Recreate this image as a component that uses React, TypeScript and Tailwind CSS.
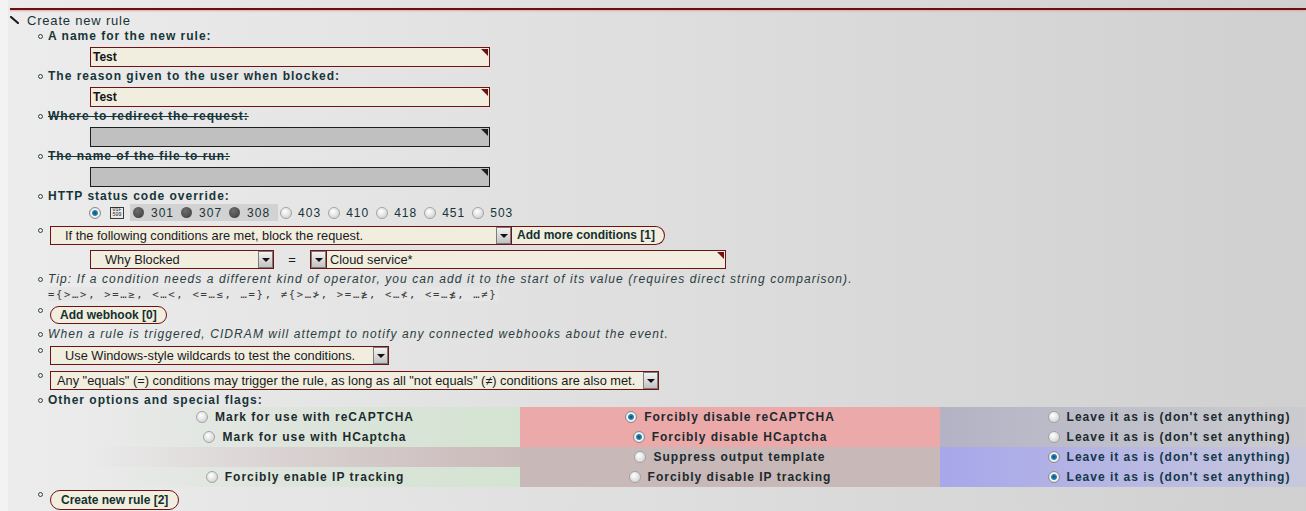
import React from "react";

type FlagRow = {
  left?: string;
  middle: string;
  middleOn: boolean;
  rightOn: boolean;
};

const flagRows: FlagRow[] = [
  { left: "Mark for use with reCAPTCHA", middle: "Forcibly disable reCAPTCHA", middleOn: true, rightOn: false },
  { left: "Mark for use with HCaptcha", middle: "Forcibly disable HCaptcha", middleOn: true, rightOn: false },
  { middle: "Suppress output template", middleOn: false, rightOn: true },
  { left: "Forcibly enable IP tracking", middle: "Forcibly disable IP tracking", middleOn: false, rightOn: true },
];

const statusCodes = ["403", "410", "418", "451", "503"];

function Radio({ checked }: { checked?: boolean }) {
  return checked ? (
    <span className="inline-block w-[12px] h-[12px] shrink-0 rounded-full border border-[#8c8c8c] bg-[radial-gradient(circle,#0b4c73_0px,#2c86b8_2.5px,#f6f6f6_3.5px,#d2d2d2_6px)]" />
  ) : (
    <span className="inline-block w-[12px] h-[12px] shrink-0 rounded-full border border-[#a3a3a3] bg-[radial-gradient(circle_at_40%_35%,#ffffff,#c9c9c9)]" />
  );
}

function DisabledRadio() {
  return <span className="inline-block w-[11px] h-[11px] shrink-0 rounded-full bg-[radial-gradient(circle_at_40%_35%,#6e6e6e,#3a3a3a)]" />;
}

// one list row: small hollow bullet, then the content
function Item({ raised, className = "", children }: { raised?: boolean; className?: string; children: React.ReactNode }) {
  return (
    <li className={`flex ${className}`}>
      <span className="w-[11px] shrink-0 flex">
        <span
          className={
            raised
              ? "mt-[2px] ml-[1px] w-[5px] h-[5px] rounded-full border border-[#2c4448]"
              : "mt-[6px] ml-[1px] w-[5px] h-[5px] rounded-full border border-[#2c4448]"
          }
        />
      </span>
      <div className="flex-1 min-w-0">{children}</div>
    </li>
  );
}

function Corner({ dark }: { dark?: boolean }) {
  return (
    <span
      className={
        dark
          ? "absolute top-[1px] right-[1px] w-0 h-0 border-l-[7px] border-l-transparent border-t-[7px] border-t-[#1e1e1e]"
          : "absolute top-[1px] right-[1px] w-0 h-0 border-l-[7px] border-l-transparent border-t-[7px] border-t-[#6e1212]"
      }
    />
  );
}

function Field({ value, disabled }: { value?: string; disabled?: boolean }) {
  return disabled ? (
    <div className="relative ml-[42px] mt-[3px] mb-[1px] w-[400px] h-[20px] border border-[#1e1e1e] bg-[#c0c0c0]">
      <Corner dark />
    </div>
  ) : (
    <div className="relative ml-[42px] mt-[3px] mb-[1px] w-[400px] h-[20px] border border-[#6e1212] bg-[#f1eee0] pl-[2px] text-[12px] font-bold leading-[18px] text-[#161616]">
      {value}
      <Corner />
    </div>
  );
}

function Arrow() {
  return (
    <span className="w-[15px] h-full shrink-0 border border-[#7c7c7c] bg-[linear-gradient(#f2f2f2,#c2c2c2)] flex items-center justify-center">
      <span className="w-0 h-0 border-x-[4px] border-x-transparent border-t-[4px] border-t-[#111]" />
    </span>
  );
}

function Dropdown({ text, className }: { text?: string; className: string }) {
  return (
    <div className={`flex h-[19px] border border-[#6e1212] bg-[#f1eee0] text-[12.8px] leading-[17px] text-[#1a1a1a] ${className}`}>
      <span className="flex-1 whitespace-nowrap overflow-hidden">{text}</span>
      <Arrow />
    </div>
  );
}

export default function App() {
  const label = "text-[12px] font-bold tracking-[1px] leading-[16px] text-[#173438]";
  const note = "text-[12px] italic tracking-[1.08px] leading-[16px] text-[#2b3d40]";

  return (
    <div className="w-[1306px] h-[511px] overflow-hidden bg-[#f3f3f3] font-['Liberation_Sans',Arial,sans-serif]">
      <div className="ml-[8px] h-full pt-[8px] bg-[linear-gradient(to_right,#ececec,#d0d0d0)]">
        <div className="ml-[2px] h-[2px] bg-[#6a1010] shadow-[0_1px_2px_#e9a3a3]" />

        <div className="mt-[2px] h-[16px] flex items-center">
          <svg width="9" height="8" viewBox="0 0 9 8" className="ml-[2px]">
            <path d="M1 1 L8 7" stroke="#1d1d1d" strokeWidth="2.2" strokeLinecap="round" />
          </svg>
          <span className="ml-[8px] pt-[1px] text-[13px] tracking-[0.8px] leading-[16px] text-[#173438]">Create new rule</span>
        </div>

        <ul className="pl-[29px]">
          <Item>
            <div className={label}>A name for the new rule:</div>
            <Field value="Test" />
          </Item>
          <Item>
            <div className={label}>The reason given to the user when blocked:</div>
            <Field value="Test" />
          </Item>
          <Item>
            <div className={`${label} line-through`}>Where to redirect the request:</div>
            <Field disabled />
          </Item>
          <Item>
            <div className={`${label} line-through`}>The name of the file to run:</div>
            <Field disabled />
          </Item>
          <Item>
            <div className={label}>HTTP status code override:</div>
            <div className="ml-[41px] h-[17px] flex items-center text-[12px] tracking-[1px] text-[#173438]">
              <Radio checked />
              <span className="ml-[9px] w-[14px] h-[12px] border border-[#3a3a3a] flex flex-col items-center justify-center font-['Liberation_Mono',monospace] text-[5px] leading-[5px] tracking-normal text-[#222]">
                <span>01F</span>
                <span>509</span>
              </span>
              <span className="ml-[6px] h-[17px] flex items-center gap-[7px] pl-[3px] pr-[8px] bg-[#d2d2d2]">
                <DisabledRadio />
                <span>301</span>
                <DisabledRadio />
                <span>307</span>
                <DisabledRadio />
                <span>308</span>
              </span>
              {statusCodes.map((code) => (
                <span key={code} className="ml-[2px] mr-[5px] flex items-center gap-[6px]">
                  <Radio />
                  <span>{code}</span>
                </span>
              ))}
            </div>
          </Item>

          <Item raised className="mt-[5px]">
            <div className="ml-[2px] flex">
              <Dropdown className="w-[462px] pl-[14px]" text="If the following conditions are met, block the request." />
              <button className="block h-[19px] border border-[#6e1212] border-l-0 rounded-r-full bg-[#f1eee0] pl-[5px] pr-[9px] text-[12px] font-bold leading-[17px] text-[#14302e]">
                Add more conditions [1]
              </button>
            </div>
            <div className="mt-[5px] ml-[42px] flex items-center">
              <Dropdown className="w-[184px] pl-[14px]" text="Why Blocked" />
              <span className="w-[36px] text-center text-[13px] leading-[17px] text-[#1a1a1a]">=</span>
              <Dropdown className="w-[16px]" />
              <div className="relative w-[400px] h-[19px] border border-[#6e1212] bg-[#f1eee0] pl-[3px] text-[12.8px] leading-[17px] text-[#1a1a1a]">
                Cloud service*
                <Corner />
              </div>
            </div>
          </Item>

          <Item className="mt-[2px]">
            <div className={note}>
              Tip: If a condition needs a different kind of operator, you can add it to the start of its value (requires direct string comparison).
            </div>
          </Item>
          <div className="ml-[11px] w-max h-[14px] pr-[2px] bg-[#e6e6e6] font-['DejaVu_Sans_Mono',monospace] text-[10.5px] tracking-[1.7px] leading-[14px] text-[#3a3a3a]">
            ={"{"}&gt;…&gt;, &gt;=…≥, &lt;…&lt;, &lt;=…≤, …={"}"}, ≠{"{"}&gt;…≯, &gt;=…≱, &lt;…≮, &lt;=…≰, …≠{"}"}
          </div>

          <Item raised className="mt-[5px]">
            <button className="block ml-[2px] h-[18px] rounded-full border border-[#6e1212] bg-[#f1eee0] px-[9px] text-[12px] font-bold leading-[16px] text-[#14302e]">
              Add webhook [0]
            </button>
          </Item>
          <Item className="mt-[2px]">
            <div className={note}>
              When a rule is triggered, CIDRAM will attempt to notify any connected webhooks about the event.
            </div>
          </Item>
          <Item raised className="mt-[4px]">
            <Dropdown className="ml-[2px] w-[339px] pl-[14px]" text="Use Windows-style wildcards to test the conditions." />
          </Item>
          <Item raised className="mt-[6px]">
            <Dropdown
              className="ml-[2px] w-[609px] pl-[6px]"
              text={'Any "equals" (=) conditions may trigger the rule, as long as all "not equals" (≠) conditions are also met.'}
            />
          </Item>
          <Item className="mt-[2px]">
            <div className={label}>Other options and special flags:</div>
            <div className="-mt-[1px] ml-[42px] grid grid-cols-[430px_420px_458px] text-[12px] font-bold tracking-[1px] leading-[20px] text-[#1b2b2d]">
              {flagRows.map((row, i) => (
                <React.Fragment key={i}>
                  <div
                    className={
                      row.left
                        ? "h-[20px] flex items-center justify-center gap-[7px] bg-[linear-gradient(to_right,rgba(212,228,210,0),#d4e4d2)]"
                        : "h-[20px] bg-[linear-gradient(to_right,rgba(204,188,188,0),#cbbaba)]"
                    }
                  >
                    {row.left && (
                      <>
                        <Radio />
                        <span>{row.left}</span>
                      </>
                    )}
                  </div>
                  <div className={row.middleOn ? "h-[20px] flex items-center justify-center gap-[7px] bg-[#eca9a9]" : "h-[20px] flex items-center justify-center gap-[7px] bg-[#c8b8b8]"}>
                    <Radio checked={row.middleOn} />
                    <span>{row.middle}</span>
                  </div>
                  <div
                    className={
                      row.rightOn
                        ? "h-[20px] flex items-center justify-center gap-[7px] text-[#13384a] bg-[linear-gradient(to_right,#a7a7eb,#d0d0d8)]"
                        : "h-[20px] flex items-center justify-center gap-[7px] bg-[linear-gradient(to_right,#b3b3c5,#d2d2d2)]"
                    }
                  >
                    <Radio checked={row.rightOn} />
                    <span>Leave it as is (don't set anything)</span>
                  </div>
                </React.Fragment>
              ))}
            </div>
          </Item>
          <Item raised className="mt-[3px]">
            <button className="block ml-[2px] h-[20px] rounded-full border border-[#6e1212] bg-[#f1eee0] px-[10px] text-[12px] font-bold leading-[18px] text-[#14302e]">
              Create new rule [2]
            </button>
          </Item>
        </ul>
      </div>
    </div>
  );
}
